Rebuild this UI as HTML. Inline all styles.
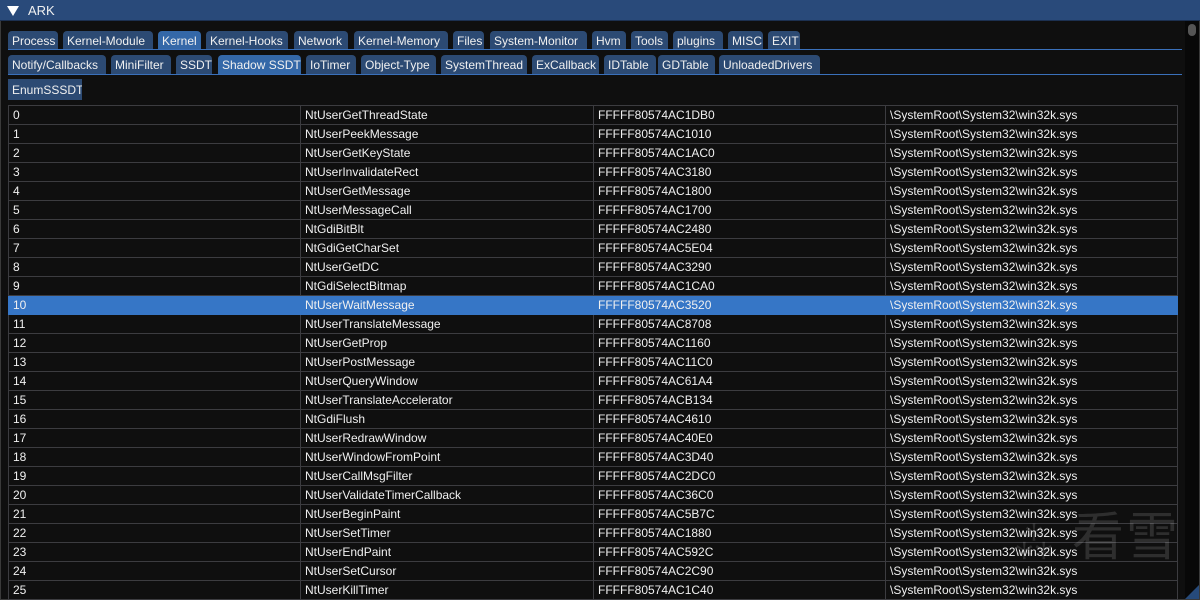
<!DOCTYPE html>
<html><head><meta charset="utf-8"><style>
*{margin:0;padding:0;box-sizing:border-box}
body{width:1200px;height:600px;background:#0f0f0f;overflow:hidden;position:relative;font-family:"Liberation Sans","Noto Sans CJK SC",sans-serif;font-size:12px;color:#f0f0f0}
.title{position:absolute;left:0;top:0;width:1200px;height:21px;background:#294a7a;border-bottom:1px solid #1c3050}
.title span{position:absolute;left:28px;top:3px;font-size:13px}
.tri{position:absolute;left:7px;top:6px;width:0;height:0;border-left:6px solid transparent;border-right:6px solid transparent;border-top:10px solid #fff}
.frame{position:absolute;left:0;top:21px;width:1200px;height:579px;border:1px solid #3a3a3a;border-top:none}
.tab{position:absolute;height:19px;background:#2c4a73;border-radius:4px 4px 0 0;padding:3px 0 0 4px;white-space:nowrap;overflow:hidden;font-size:12px}
.tab.a{background:#3468a8}
.line{position:absolute;left:8px;width:1174px;height:1px;background:#3a70ba}
.btn{position:absolute;left:8px;top:79px;width:74px;height:21px;background:#2c4a73;padding:4px 0 0 4px;font-size:12px;white-space:nowrap;overflow:hidden}
table{position:absolute;left:8px;top:105px;border-collapse:collapse;width:1170px}
td{border:1px solid #3c3c40;height:19px;padding:0 0 0 4px;line-height:17px;white-space:nowrap}
td:nth-child(1){width:292px}td:nth-child(2){width:293px}td:nth-child(3){width:292px}
tr.h td{background:#3676c6;border-color:#3676c6}
.sb{position:absolute;left:1185px;top:21px;width:14px;height:578px;background:#080808}
.th{position:absolute;left:1188px;top:24px;width:8px;height:12px;background:#555;border-radius:4px}
.wm{position:absolute;left:1072px;top:508px;font-size:52px;line-height:60px;color:rgba(255,255,255,0.13);letter-spacing:2px}
.logo{position:absolute;left:1012px;top:520px;width:48px;height:48px;color:rgba(255,255,255,0.13);font-size:44px;line-height:48px}
.corner{position:absolute;right:1px;bottom:1px;width:0;height:0;border-left:14px solid transparent;border-bottom:14px solid #264a7a}
</style></head><body>
<div class="title"><div class="tri"></div><span>ARK</span></div>
<div class="frame"></div>
<div class="tab" style="left:8px;top:31px;width:50px">Process</div>
<div class="tab" style="left:63px;top:31px;width:90px">Kernel-Module</div>
<div class="tab a" style="left:158px;top:31px;width:43px">Kernel</div>
<div class="tab" style="left:206px;top:31px;width:82px">Kernel-Hooks</div>
<div class="tab" style="left:294px;top:31px;width:54px">Network</div>
<div class="tab" style="left:354px;top:31px;width:94px">Kernel-Memory</div>
<div class="tab" style="left:453px;top:31px;width:31px">Files</div>
<div class="tab" style="left:490px;top:31px;width:97px">System-Monitor</div>
<div class="tab" style="left:592px;top:31px;width:34px">Hvm</div>
<div class="tab" style="left:631px;top:31px;width:37px">Tools</div>
<div class="tab" style="left:673px;top:31px;width:50px">plugins</div>
<div class="tab" style="left:728px;top:31px;width:35px">MISC</div>
<div class="tab" style="left:768px;top:31px;width:32px">EXIT</div>
<div class="line" style="top:49px"></div>
<div class="tab" style="left:8px;top:55px;width:98px">Notify/Callbacks</div>
<div class="tab" style="left:111px;top:55px;width:60px">MiniFilter</div>
<div class="tab" style="left:176px;top:55px;width:36px">SSDT</div>
<div class="tab a" style="left:218px;top:55px;width:83px">Shadow SSDT</div>
<div class="tab" style="left:306px;top:55px;width:50px">IoTimer</div>
<div class="tab" style="left:361px;top:55px;width:75px">Object-Type</div>
<div class="tab" style="left:441px;top:55px;width:86px">SystemThread</div>
<div class="tab" style="left:532px;top:55px;width:67px">ExCallback</div>
<div class="tab" style="left:604px;top:55px;width:52px">IDTable</div>
<div class="tab" style="left:658px;top:55px;width:57px">GDTable</div>
<div class="tab" style="left:719px;top:55px;width:101px">UnloadedDrivers</div>
<div class="line" style="top:74px"></div>
<div class="btn">EnumSSSDT</div>
<table>
<tr><td>0</td><td>NtUserGetThreadState</td><td>FFFFF80574AC1DB0</td><td>\SystemRoot\System32\win32k.sys</td></tr>
<tr><td>1</td><td>NtUserPeekMessage</td><td>FFFFF80574AC1010</td><td>\SystemRoot\System32\win32k.sys</td></tr>
<tr><td>2</td><td>NtUserGetKeyState</td><td>FFFFF80574AC1AC0</td><td>\SystemRoot\System32\win32k.sys</td></tr>
<tr><td>3</td><td>NtUserInvalidateRect</td><td>FFFFF80574AC3180</td><td>\SystemRoot\System32\win32k.sys</td></tr>
<tr><td>4</td><td>NtUserGetMessage</td><td>FFFFF80574AC1800</td><td>\SystemRoot\System32\win32k.sys</td></tr>
<tr><td>5</td><td>NtUserMessageCall</td><td>FFFFF80574AC1700</td><td>\SystemRoot\System32\win32k.sys</td></tr>
<tr><td>6</td><td>NtGdiBitBlt</td><td>FFFFF80574AC2480</td><td>\SystemRoot\System32\win32k.sys</td></tr>
<tr><td>7</td><td>NtGdiGetCharSet</td><td>FFFFF80574AC5E04</td><td>\SystemRoot\System32\win32k.sys</td></tr>
<tr><td>8</td><td>NtUserGetDC</td><td>FFFFF80574AC3290</td><td>\SystemRoot\System32\win32k.sys</td></tr>
<tr><td>9</td><td>NtGdiSelectBitmap</td><td>FFFFF80574AC1CA0</td><td>\SystemRoot\System32\win32k.sys</td></tr>
<tr class="h"><td>10</td><td>NtUserWaitMessage</td><td>FFFFF80574AC3520</td><td>\SystemRoot\System32\win32k.sys</td></tr>
<tr><td>11</td><td>NtUserTranslateMessage</td><td>FFFFF80574AC8708</td><td>\SystemRoot\System32\win32k.sys</td></tr>
<tr><td>12</td><td>NtUserGetProp</td><td>FFFFF80574AC1160</td><td>\SystemRoot\System32\win32k.sys</td></tr>
<tr><td>13</td><td>NtUserPostMessage</td><td>FFFFF80574AC11C0</td><td>\SystemRoot\System32\win32k.sys</td></tr>
<tr><td>14</td><td>NtUserQueryWindow</td><td>FFFFF80574AC61A4</td><td>\SystemRoot\System32\win32k.sys</td></tr>
<tr><td>15</td><td>NtUserTranslateAccelerator</td><td>FFFFF80574ACB134</td><td>\SystemRoot\System32\win32k.sys</td></tr>
<tr><td>16</td><td>NtGdiFlush</td><td>FFFFF80574AC4610</td><td>\SystemRoot\System32\win32k.sys</td></tr>
<tr><td>17</td><td>NtUserRedrawWindow</td><td>FFFFF80574AC40E0</td><td>\SystemRoot\System32\win32k.sys</td></tr>
<tr><td>18</td><td>NtUserWindowFromPoint</td><td>FFFFF80574AC3D40</td><td>\SystemRoot\System32\win32k.sys</td></tr>
<tr><td>19</td><td>NtUserCallMsgFilter</td><td>FFFFF80574AC2DC0</td><td>\SystemRoot\System32\win32k.sys</td></tr>
<tr><td>20</td><td>NtUserValidateTimerCallback</td><td>FFFFF80574AC36C0</td><td>\SystemRoot\System32\win32k.sys</td></tr>
<tr><td>21</td><td>NtUserBeginPaint</td><td>FFFFF80574AC5B7C</td><td>\SystemRoot\System32\win32k.sys</td></tr>
<tr><td>22</td><td>NtUserSetTimer</td><td>FFFFF80574AC1880</td><td>\SystemRoot\System32\win32k.sys</td></tr>
<tr><td>23</td><td>NtUserEndPaint</td><td>FFFFF80574AC592C</td><td>\SystemRoot\System32\win32k.sys</td></tr>
<tr><td>24</td><td>NtUserSetCursor</td><td>FFFFF80574AC2C90</td><td>\SystemRoot\System32\win32k.sys</td></tr>
<tr><td>25</td><td>NtUserKillTimer</td><td>FFFFF80574AC1C40</td><td>\SystemRoot\System32\win32k.sys</td></tr>
</table>
<div class="logo">⁂</div>
<div class="wm">看雪</div>
<div class="sb"></div><div class="th"></div>
<div class="corner"></div>
</body></html>
